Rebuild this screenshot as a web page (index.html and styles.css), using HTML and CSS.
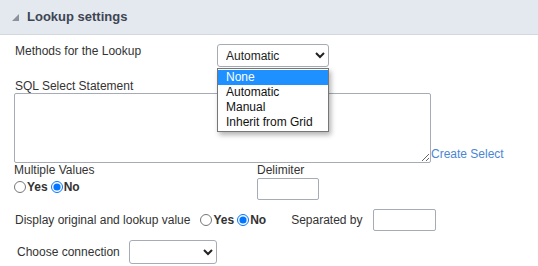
FILE: index.html
```html
<!DOCTYPE html>
<html lang="en">
<head>
  <meta charset="UTF-8">
  <meta name="viewport" content="width=device-width, initial-scale=1.0">
  <title>Lookup settings</title>
  <link rel="stylesheet" href="styles.css">
</head>
<body>
  <div class="panel-head">
    <span class="toggle"></span>
    <span class="panel-title">Lookup settings</span>
  </div>

  <div class="panel-body">
    <div class="row row-method">
      <label class="method-label" for="lookupMethod">Methods for the Lookup</label>
      <div class="select-wrap">
        <select id="lookupMethod" class="method-select">
          <option>Automatic</option>
        </select>
        <!-- open dropdown list -->
        <ul class="dropdown">
          <li class="active">None</li>
          <li>Automatic</li>
          <li>Manual</li>
          <li>Inherit from Grid</li>
        </ul>
      </div>
    </div>

    <div class="sql-label">SQL Select Statement</div>
    <div class="row row-sql">
      <textarea class="sql-box"></textarea>
      <a href="#" class="create-link">Create Select</a>
    </div>

    <div class="row row-multi">
      <div class="multi-col">
        <div>Multiple Values</div>
        <div class="radios">
          <input type="radio" name="multi"><b>Yes</b>
          <input type="radio" name="multi" checked><b>No</b>
        </div>
      </div>
      <div class="delim-col">
        <div>Delimiter</div>
        <input type="text" class="small-input">
      </div>
    </div>

    <div class="row row-display">
      <span class="display-label">Display original and lookup value</span>
      <span class="radios">
        <input type="radio" name="display"><b>Yes</b>
        <input type="radio" name="display" checked><b>No</b>
      </span>
      <span class="sep-label">Separated by</span>
      <input type="text" class="small-input sep-input">
    </div>

    <div class="row row-conn">
      <label class="conn-label" for="conn">Choose connection</label>
      <select id="conn" class="conn-select">
        <option></option>
      </select>
    </div>
  </div>
</body>
</html>
```

FILE: styles.css
```css
body {
  font-family: "Liberation Sans", Arial, sans-serif;
  font-size: 12px;
  line-height: 14px;
  color: #333;
  margin: 0;
  padding: 0;
  background: #fff;
}

.panel-head {
  display: flex;
  align-items: center;
  height: 34px;
  padding-left: 12px;
  background: #e4e8ef;
  border-bottom: 1px solid #d3d8df;
}

.toggle {
  width: 0;
  height: 0;
  border-left: 7px solid transparent;
  border-bottom: 7px solid #8b929c;
  margin-right: 8px;
  margin-top: 1px;
}

.panel-title {
  font-size: 13px;
  font-weight: bold;
  color: #3d4553;
}

.panel-body {
  padding-left: 14px;
}

.row {
  display: flex;
}

.row-method {
  margin-top: 9px;
}

.method-label {
  width: 202px;
  padding-left: 1px;
}

.select-wrap {
  position: relative;
}

select,
input,
textarea {
  font-family: inherit;
  font-size: 12px;
  color: #222;
  box-sizing: border-box;
  margin: 0;
}

.method-select {
  width: 112px;
  height: 23px;
  padding-left: 4px;
  border: 1px solid #a6acb5;
  border-radius: 3px;
  background: #fff;
}

.dropdown {
  position: absolute;
  top: 24px;
  left: 0;
  width: 112px;
  box-sizing: border-box;
  margin: 0;
  padding: 1px 0;
  list-style: none;
  background: #fff;
  border: 1px solid #767676;
  box-shadow: 2px 3px 5px rgba(0, 0, 0, 0.3);
  z-index: 5;
}

.dropdown li {
  height: 15px;
  line-height: 15px;
  padding-left: 8px;
  color: #111;
}

.dropdown li.active {
  background: #1e90ff;
  color: #fff;
}

.sql-label {
  margin-top: 12px;
  padding-left: 1px;
}

.row-sql {
  align-items: flex-end;
}

.sql-box {
  width: 417px;
  height: 70px;
  border: 1px solid #a6acb5;
  border-radius: 2px;
  resize: both;
}

.create-link {
  color: #4a86d4;
  text-decoration: none;
  margin-bottom: 2px;
}

.multi-col {
  width: 243px;
}

.radios {
  display: inline-flex;
  align-items: center;
  margin-top: 3px;
}

.radios input {
  width: 12px;
  height: 12px;
  margin: 0 1px 0 0;
}

.radios b + input {
  margin-left: 3px;
}

.small-input {
  width: 62px;
  height: 22px;
  border: 1px solid #a6acb5;
  border-radius: 2px;
  margin-top: 1px;
}

.row-display {
  align-items: center;
  margin-top: 9px;
}

.display-label {
  padding-left: 1px;
}

.row-display .radios {
  margin: 0 0 0 10px;
}

.sep-label {
  margin-left: 25px;
}

.sep-input {
  width: 63px;
  margin: 0 0 0 10px;
}

.row-conn {
  align-items: center;
  margin-top: 9px;
}

.conn-label {
  padding-left: 3px;
}

.conn-select {
  width: 88px;
  height: 24px;
  margin-left: 9px;
  border: 1px solid #a6acb5;
  border-radius: 3px;
  background: #fff;
}
```
